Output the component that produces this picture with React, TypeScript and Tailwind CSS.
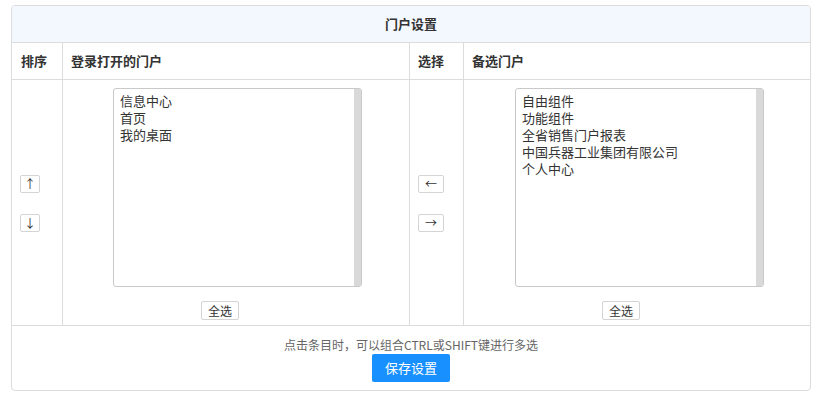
import React from "react";

const font = { fontFamily: '"Noto Sans CJK SC", "Microsoft YaHei", sans-serif' };

function ListBox({ items }: { items: string[] }) {
  return (
    <div className="flex w-[249px] h-[199px] border border-[#c9c9c9] rounded-[3px] overflow-hidden bg-white">
      <div className="flex-1 pl-[6px] pt-[3px] text-[13px] leading-[17px] text-[#333]">
        {items.map((t) => (
          <div key={t}>{t}</div>
        ))}
      </div>
      <div className="w-[7px] bg-[#d9d9d9]" />
    </div>
  );
}

function SmallBtn({ children, w }: { children: React.ReactNode; w: string }) {
  return (
    <button
      className={`${w} h-[18px] border border-[#d4d4d4] rounded-[2px] bg-white text-[12px] leading-[16px] text-[#333] flex items-center justify-center`}
    >
      {children}
    </button>
  );
}

function SelectAll() {
  return (
    <button className="w-[38px] h-[19px] border border-[#d4d4d4] rounded-[2px] bg-white text-[12px] leading-[17px] text-[#333]">
      全选
    </button>
  );
}

export default function App() {
  return (
    <div className="w-[819px] h-[395px] bg-white pt-[5px] pl-[11px]" style={font}>
      <div className="w-[800px] border border-[#dcdcdc] rounded-[4px] overflow-hidden text-[#333]">
        <div className="h-[37px] bg-[#f3f8ff] border-b border-[#dcdcdc] flex items-center justify-center text-[13px] font-bold">
          门户设置
        </div>
        <div className="grid grid-cols-[51px_347px_54px_346px] h-[37px] border-b border-[#dcdcdc] text-[13px] font-bold">
          <div className="border-r border-[#dcdcdc] pl-[9px] flex items-center">排序</div>
          <div className="border-r border-[#dcdcdc] pl-[8px] flex items-center">登录打开的门户</div>
          <div className="border-r border-[#dcdcdc] pl-[8px] flex items-center">选择</div>
          <div className="pl-[8px] flex items-center">备选门户</div>
        </div>
        <div className="grid grid-cols-[51px_347px_54px_346px] h-[246px] border-b border-[#dcdcdc]">
          <div className="border-r border-[#dcdcdc] pl-[8px] pt-[2px] flex flex-col justify-center gap-[21px]">
            <SmallBtn w="w-[20px]">↑</SmallBtn>
            <SmallBtn w="w-[20px]">↓</SmallBtn>
          </div>
          <div className="border-r border-[#dcdcdc] pt-[8px] pl-[50px] flex flex-col">
            <ListBox items={["信息中心", "首页", "我的桌面"]} />
            <div className="mt-[10px] pl-[88px]">
              <SelectAll />
            </div>
          </div>
          <div className="border-r border-[#dcdcdc] pl-[8px] pt-[2px] flex flex-col justify-center gap-[21px]">
            <SmallBtn w="w-[26px]">←</SmallBtn>
            <SmallBtn w="w-[26px]">→</SmallBtn>
          </div>
          <div className="pt-[8px] pl-[51px] flex flex-col">
            <ListBox items={["自由组件", "功能组件", "全省销售门户报表", "中国兵器工业集团有限公司", "个人中心"]} />
            <div className="mt-[10px] pl-[87px]">
              <SelectAll />
            </div>
          </div>
        </div>
        <div className="h-[64px] flex flex-col items-center pt-[10px]">
          <div className="text-[12px] leading-[18px] text-[#666]">点击条目时，可以组合CTRL或SHIFT键进行多选</div>
          <button className="w-[78px] h-[28px] bg-[#1890ff] rounded-[2px] text-white text-[13px]">保存设置</button>
        </div>
      </div>
    </div>
  );
}
